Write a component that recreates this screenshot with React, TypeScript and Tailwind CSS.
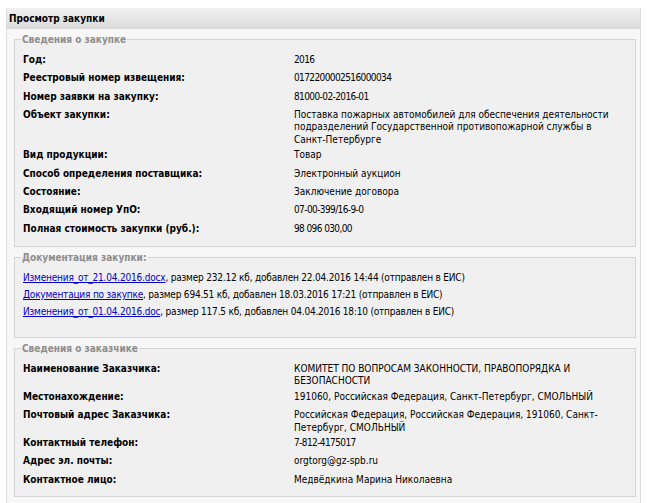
import React from "react";

const font = { fontFamily: '"DejaVu Sans Condensed", "DejaVu Sans", sans-serif', fontStretch: "condensed" as const };

type Row = { label: string; value: React.ReactNode; num?: boolean };

function Rows({ rows }: { rows: Row[] }) {
  return (
    <div className="grid grid-cols-[271px_1fr]">
      {rows.map((r, i) => (
        <React.Fragment key={i}>
          <div className="min-h-[18.3px] pt-[1px] pb-[2px] text-[10px] leading-[12.5px] font-bold text-black">{r.label}</div>
          <div
            className={
              r.num
                ? "min-h-[18.3px] pt-[1px] pb-[2px] text-[10px] leading-[12.5px] text-black whitespace-nowrap tracking-[-0.6px]"
                : "min-h-[18.3px] pt-[1px] pb-[2px] text-[10px] leading-[12.5px] text-black whitespace-nowrap"
            }
          >
            {r.value}
          </div>
        </React.Fragment>
      ))}
    </div>
  );
}

function Box({ title, children, className }: { title: string; children: React.ReactNode; className?: string }) {
  return (
    <fieldset className={"ml-[7px] w-[622px] border border-[#d4d4d4] bg-[#f0f0f0] px-[8px] " + (className ?? "")}>
      <legend className="ml-[-2px] px-[1px] text-[10px] leading-[13px] font-bold text-[#8e8e8e]">{title}</legend>
      {children}
    </fieldset>
  );
}

export default function App() {
  const info: Row[] = [
    { label: "Год:", value: "2016", num: true },
    { label: "Реестровый номер извещения:", value: "0172200002516000034", num: true },
    { label: "Номер заявки на закупку:", value: "81000-02-2016-01", num: true },
    {
      label: "Объект закупки:",
      value: (
        <>
          Поставка пожарных автомобилей для обеспечения деятельности
          <br />
          подразделений Государственной противопожарной службы в
          <br />
          Санкт-Петербурге
        </>
      ),
    },
    { label: "Вид продукции:", value: "Товар" },
    { label: "Способ определения поставщика:", value: "Электронный аукцион" },
    { label: "Состояние:", value: "Заключение договора" },
    { label: "Входящий номер УпО:", value: "07-00-399/16-9-0", num: true },
    { label: "Полная стоимость закупки (руб.):", value: "98 096 030,00", num: true },
  ];
  const customer: Row[] = [
    {
      label: "Наименование Заказчика:",
      value: (
        <>
          КОМИТЕТ ПО ВОПРОСАМ ЗАКОННОСТИ, ПРАВОПОРЯДКА И
          <br />
          БЕЗОПАСНОСТИ
        </>
      ),
    },
    { label: "Местонахождение:", value: "191060, Российская Федерация, Санкт-Петербург, СМОЛЬНЫЙ" },
    {
      label: "Почтовый адрес Заказчика:",
      value: (
        <>
          Российская Федерация, Российская Федерация, 191060, Санкт-
          <br />
          Петербург, СМОЛЬНЫЙ
        </>
      ),
    },
    { label: "Контактный телефон:", value: "7-812-4175017", num: true },
    { label: "Адрес эл. почты:", value: "orgtorg@gz-spb.ru" },
    { label: "Контактное лицо:", value: "Медвёдкина Марина Николаевна" },
  ];
  const docs = [
    { name: "Изменения_от_21.04.2016.docx", rest: ", размер 232.12 кб, добавлен 22.04.2016 14:44 (отправлен в ЕИС)" },
    { name: "Документация по закупке", rest: ", размер 694.51 кб, добавлен 18.03.2016 17:21 (отправлен в ЕИС)" },
    { name: "Изменения_от_01.04.2016.doc", rest: ", размер 117.5 кб, добавлен 04.04.2016 18:10 (отправлен в ЕИС)" },
  ];

  return (
    <div className="w-[647px] h-[503px] overflow-hidden bg-white pt-[8px] pl-[6px]" style={font}>
      <div className="w-[635px] h-[520px] border-l border-r border-[#dedede] bg-[#f7f7f7]">
        <div className="h-[21px] bg-gradient-to-b from-[#f2f2f2] to-[#dadada] pl-[2px] text-[10px] leading-[21px] font-bold text-black">
          Просмотр закупки
        </div>
        <div className="pt-[4px]">
          <Box title="Сведения о закупке" className="pt-[7px] pb-[6px]">
            <Rows rows={info} />
          </Box>
          <Box title="Документация закупки:" className="mt-[4px] pt-[5px] pb-[16px]">
            <div className="flex flex-col">
              {docs.map((d, i) => (
                <div key={i} className="text-[10px] leading-[17.3px] text-black whitespace-nowrap tracking-[-0.2px]">
                  <a href="#" className="text-[#0000cc] underline">
                    {d.name}
                  </a>
                  {d.rest}
                </div>
              ))}
            </div>
          </Box>
          <Box title="Сведения о заказчике" className="mt-[4px] pt-[7px] pb-[5px]">
            <Rows rows={customer} />
          </Box>
        </div>
      </div>
    </div>
  );
}
